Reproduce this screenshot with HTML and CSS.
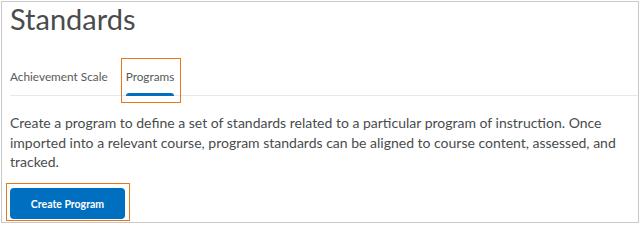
FILE: index.html
```html
<!DOCTYPE html>
<html lang="en">
<head>
<meta charset="utf-8">
<title>Standards</title>
<link rel="stylesheet" href="styles.css">
</head>
<body>
<div class="frame">
  <h1 class="title">Standards</h1>
  <nav class="tabs">
    <div class="tab">Achievement Scale</div>
    <div class="tab tab-active">Programs<span class="highlight highlight-tab"></span></div>
  </nav>
  <p class="desc">Create a program to define a set of standards related to a particular program of instruction. Once imported into a relevant course, program standards can be aligned to course content, assessed, and tracked.</p>
  <div class="actions">
    <button class="btn-primary" type="button">Create Program</button>
    <span class="highlight highlight-btn"></span>
  </div>
</div>
</body>
</html>
```
FILE: styles.css
```css
html, body {
  margin: 0;
  padding: 0;
  background: #ffffff;
}
body {
  font-family: Lato, "Noto Sans", sans-serif;
  color: #494c4e;
}
.frame {
  box-sizing: border-box;
  margin: 1px;
  width: 638px;
  height: 222px;
  border: 1px solid #c9c9c9;
  padding: 0 0 0 8px;
  overflow: hidden;
}
.title {
  margin: 0;
  font-size: 29px;
  font-weight: 400;
  line-height: 33px;
  color: #494c4e;
}
.tabs {
  display: flex;
  gap: 18px;
  margin-top: 23px;
  border-bottom: 1px solid #e3e9f1;
  height: 37px;
  align-items: stretch;
}
.tab {
  position: relative;
  font-size: 11.8px;
  line-height: 16px;
  padding-top: 11px;
  color: #565a5c;
}
.tab-active::after {
  content: "";
  position: absolute;
  left: 0;
  right: 0;
  bottom: -1px;
  height: 3px;
  border-radius: 3px 3px 0 0;
  background: #006fbf;
}
.highlight {
  position: absolute;
  border: 1.5px solid #e8761a;
  pointer-events: none;
}
.highlight-tab {
  top: 0;
  bottom: -8px;
  left: -5px;
  right: -7px;
}
.desc {
  margin: 17px 0 0 0;
  font-size: 14px;
  line-height: 19.5px;
  padding-right: 20px;
}
.actions {
  position: relative;
  margin-top: 16.5px;
  display: flex;
  width: 115px;
}
.btn-primary {
  font-family: Lato, "Noto Sans", sans-serif;
  font-weight: 700;
  font-size: 10.5px;
  color: #ffffff;
  background: #006fbf;
  border: none;
  border-radius: 4px;
  width: 115px;
  height: 31px;
  padding: 0;
}
.highlight-btn {
  top: -5.5px;
  bottom: -1.5px;
  left: -4px;
  right: -5px;
}
```
